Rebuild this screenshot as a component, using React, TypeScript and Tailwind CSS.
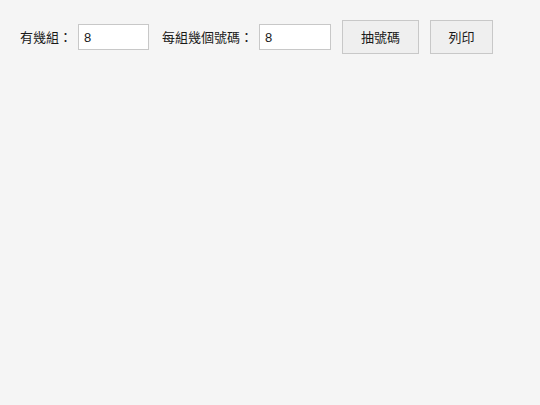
export default function App() {
  return (
    <div className="min-h-[405px] w-full bg-[#f5f5f5] px-5 pt-5 text-[13px] text-[#1a1a1a] [font-family:'Noto_Sans_CJK_TC','Noto_Sans',sans-serif]">
      <div className="flex items-center">
        <label className="whitespace-nowrap">有幾組：</label>
        <input
          defaultValue="8"
          className="ml-[6px] h-[26px] w-[71px] border border-[#c8c8c8] bg-white px-[5px] text-[13px] outline-none [font-family:'Liberation_Sans',sans-serif]"
        />
        <label className="ml-[13px] whitespace-nowrap">每組幾個號碼：</label>
        <input
          defaultValue="8"
          className="ml-[6px] h-[26px] w-[72px] border border-[#c8c8c8] bg-white px-[5px] text-[13px] outline-none [font-family:'Liberation_Sans',sans-serif]"
        />
        <button className="ml-[11px] h-[34px] w-[77px] border border-[#c8c8c8] bg-[#efefef] text-[13px]">
          抽號碼
        </button>
        <button className="ml-[11px] h-[34px] w-[63px] border border-[#c8c8c8] bg-[#efefef] text-[13px]">
          列印
        </button>
      </div>
    </div>
  );
}
